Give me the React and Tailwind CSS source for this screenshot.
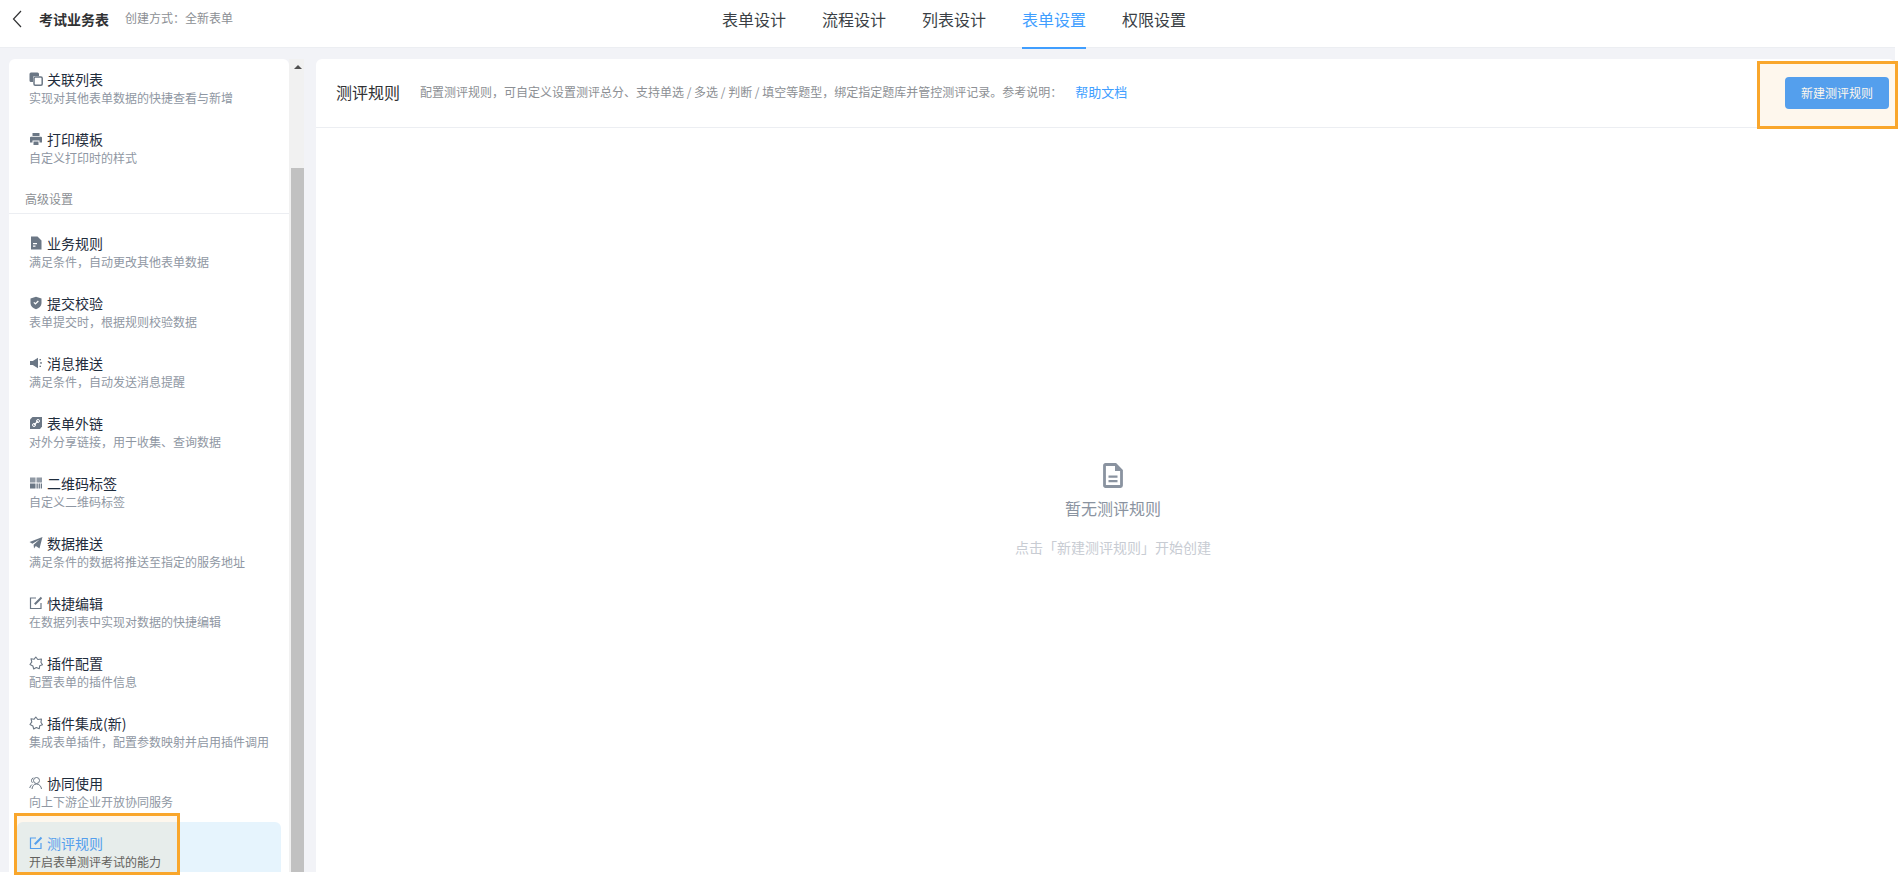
import React from 'react';

const font = { fontFamily: '"Noto Sans CJK SC", "Noto Sans", sans-serif' };

// sidebar icons, drawn on a 14x14 box
const icons = {
  link: (
    <g>
      <path d="M.5 2A1.500 1.500 0 0 1 2 .5h6.500A1.500 1.500 0 0 1 10 2v2H5.500A1.500 1.500 0 0 0 4 5.500V10H2A1.500 1.500 0 0 1 .5 8.500z" fill="currentColor" />
      <rect x="5" y="5" width="8.200" height="8.200" rx="1.200" fill="none" stroke="currentColor" strokeWidth="1.500" />
    </g>
  ),
  print: (
    <path d="M3.500 1h7v3h-7zM1 5.500A1 1 0 0 1 2 4.800h10a1 1 0 0 1 1 .7V10.500h-2.500V8.500h-7v2H1zM4.500 9.500h5V13h-5z" fill="currentColor" />
  ),
  doc: (
    <path d="M2 .5h6.500L12.500 4.500V13.500H2zM4 7v1.300h4V7zM4 9.500v1.200h2.500V9.500z" fill="currentColor" fillRule="evenodd" />
  ),
  shield: (
    <path d="M7 .800l5.500 1.700v4.800c0 3-2.400 5-5.500 6-3.100-1-5.500-3-5.500-6V2.500zM4.400 6.800l2 2 3.400-3.400-.9-.8-2.500 2.500-1.100-1.100z" fill="currentColor" fillRule="evenodd" />
  ),
  sound: (
    <g fill="currentColor">
      <path d="M1 5h2.800L9 1.800v10.400L3.800 9H1z" />
      <rect x="10.500" y="3" width="1.500" height="1.300" />
      <rect x="11" y="6.300" width="2" height="1.300" />
      <rect x="10.500" y="9.700" width="1.500" height="1.300" />
    </g>
  ),
  chain: (
    <g>
      <path d="M3.500 1H13v9.500L11 13H1V3.500z" fill="currentColor" />
      <path d="M5 9l4-4" stroke="#fff" strokeWidth="1.100" />
      <circle cx="5" cy="9" r="1.500" fill="none" stroke="#fff" strokeWidth="1" />
      <circle cx="9" cy="5" r="1.500" fill="none" stroke="#fff" strokeWidth="1" />
    </g>
  ),
  qr: (
    <g fill="currentColor">
      <rect x="1" y="1.500" width="5.500" height="5" opacity=".75" />
      <rect x="7.500" y="1.500" width="5.500" height="5" opacity=".75" />
      <rect x="1" y="7.500" width="5.500" height="5" />
      <path d="M7.500 7.500h1.300v5H7.500zM9.600 7.500h1.300v5H9.600zM11.700 7.500H13v5h-1.300z" />
    </g>
  ),
  plane: (
    <path d="M13.500 1L10.500 12.500 6.800 10 5 12.500 4.600 8.800 10.500 3.500 3.400 7.800.5 6z" fill="currentColor" />
  ),
  edit: (
    <g fill="none" stroke="currentColor">
      <path d="M12 7v5.500H1.500V2H7" strokeWidth="1.200" />
      <path d="M5.800 8.200L12.500 1.500" strokeWidth="2" />
    </g>
  ),
  plugin: (
    <path d="M6.800 1l2 2.500 3.700-.5-.6 3.300 1.600 2.400-2.800 1-.4 3.100-3-1.300-2.600 1.500-.8-3L1 8.500l1.800-2.600L2 2.800l3 .5z" fill="none" stroke="currentColor" strokeWidth="1.100" strokeLinejoin="round" />
  ),
  users: (
    <g fill="none" stroke="currentColor" strokeWidth="1">
      <circle cx="7.500" cy="4.500" r="3" />
      <path d="M3 13c.3-3 2-5 4.500-5s4.700 2 5 5" />
      <path d="M4.300 1.800A3 3 0 0 0 2.500 4.500c0 1 .4 1.800 1 2.300M3 8.500c-1 .8-2 2-2.300 3.500" />
    </g>
  ),
};

const Icon = ({ name }) => (
  <svg viewBox="0 0 14 14" className="w-[14px] h-[14px] shrink-0">
    {icons[name]}
  </svg>
);

const topItems = [
  { icon: 'link', title: '关联列表', desc: '实现对其他表单数据的快捷查看与新增' },
  { icon: 'print', title: '打印模板', desc: '自定义打印时的样式' },
];

const advancedItems = [
  { icon: 'doc', title: '业务规则', desc: '满足条件\uFF0C自动更改其他表单数据' },
  { icon: 'shield', title: '提交校验', desc: '表单提交时\uFF0C根据规则校验数据' },
  { icon: 'sound', title: '消息推送', desc: '满足条件\uFF0C自动发送消息提醒' },
  { icon: 'chain', title: '表单外链', desc: '对外分享链接\uFF0C用于收集、查询数据' },
  { icon: 'qr', title: '二维码标签', desc: '自定义二维码标签' },
  { icon: 'plane', title: '数据推送', desc: '满足条件的数据将推送至指定的服务地址' },
  { icon: 'edit', title: '快捷编辑', desc: '在数据列表中实现对数据的快捷编辑' },
  { icon: 'plugin', title: '插件配置', desc: '配置表单的插件信息' },
  { icon: 'plugin', title: '插件集成(新)', desc: '集成表单插件\uFF0C配置参数映射并启用插件调用' },
  { icon: 'users', title: '协同使用', desc: '向上下游企业开放协同服务' },
  { icon: 'edit', title: '测评规则', desc: '开启表单测评考试的能力', active: true },
];

const tabs = ['表单设计', '流程设计', '列表设计', '表单设置', '权限设置'];

const createdBy = '创建方式\uFF1A全新表单';
const ruleHint = '配置测评规则\uFF0C可自定义设置测评总分、支持单选 / 多选 / 判断 / 填空等题型\uFF0C绑定指定题库并管控测评记录。参考说明\uFF1A';

const SideItem = ({ item }) => (
  <div className={`mx-2 h-[60px] shrink-0 pt-[11px] pl-3 rounded-t-md ${item.active ? 'bg-[#e6f4fd]' : ''}`}>
    <div className={`flex items-center gap-1 h-5 text-sm leading-5 ${item.active ? 'text-[#459fff]' : 'text-[#1f2d3d]'}`}>
      <span className={item.active ? 'text-[#459fff]' : 'text-[#6b7785]'}>
        <Icon name={item.icon} />
      </span>
      <span>{item.title}</span>
    </div>
    <div className={`mt-px text-xs leading-4 whitespace-nowrap ${item.active ? 'text-[#555b63]' : 'text-[#8f97a3]'}`}>
      {item.desc}
    </div>
  </div>
);

export default function App() {
  return (
    <div className="relative h-[875px] w-full overflow-hidden bg-white" style={font}>
      <div className="w-[1895px] h-[872px] flex flex-col bg-[#f2f3f7]">
        {/* Top bar */}
        <header className="h-12 shrink-0 flex bg-white border-b border-[#eceef2]">
          <div className="w-[722px] shrink-0 flex items-start pt-[10px] pl-3">
            <svg viewBox="0 0 10 18" className="w-[10px] h-[18px] text-[#303133]">
              <path d="M9 1L1.500 9 9 17" fill="none" stroke="currentColor" strokeWidth="1.200" />
            </svg>
            <span className="ml-[17px] text-sm leading-[18px] font-bold text-[#303133]">考试业务表</span>
            <span className="ml-4 text-xs leading-[16px] text-[#8c8f94]">{createdBy}</span>
          </div>
          <nav className="flex gap-9">
            {tabs.map((tab) => (
              <div
                key={tab}
                className={`h-[49px] pt-[9px] text-base leading-5 ${tab === '表单设置' ? 'text-[#409eff] border-b-2 border-[#409eff]' : 'text-[#3a3f45]'}`}
              >
                {tab}
              </div>
            ))}
          </nav>
        </header>

        <div className="flex-1 min-h-0 flex pt-[11px] pl-[9px]">
          {/* Sidebar */}
          <aside className="w-[280px] shrink-0 bg-white rounded-t-md overflow-hidden flex flex-col">
            <div className="-mt-px">
              {topItems.map((item) => (
                <SideItem key={item.title} item={item} />
              ))}
            </div>
            <div className="shrink-0 h-9 pt-3 pl-4 text-xs leading-[18px] text-[#8c8f94] border-b border-[#eceef2]">
              高级设置
            </div>
            <div className="mt-2">
              {advancedItems.map((item) => (
                <SideItem key={item.title} item={item} />
              ))}
            </div>
          </aside>

          {/* Scrollbar */}
          <div className="w-[15px] shrink-0 bg-[#f1f1f1] flex flex-col pl-[2px]">
            <div className="h-[109px] flex justify-center pt-[6px]">
              <div className="w-0 h-0 border-x-[4px] border-x-transparent border-b-[4px] border-b-[#505050]" />
            </div>
            <div className="flex-1 bg-[#c1c1c1]" />
          </div>

          {/* Main panel */}
          <main className="ml-3 flex-1 min-w-0 bg-white rounded-t-md flex flex-col">
            <div className="h-[69px] shrink-0 flex items-center pl-5 pr-[6px] border-b border-[#eceef2]">
              <span className="mb-[2px] text-base text-[#303133]">测评规则</span>
              <span className="mb-[2px] ml-5 text-xs text-[#8c8f94] whitespace-nowrap">{ruleHint}</span>
              <a className="mb-[2px] ml-[13px] text-[13px] text-[#409eff]">帮助文档</a>
              <button className="ml-auto w-[104px] h-8 rounded-sm bg-[#459fff] text-xs text-white">新建测评规则</button>
            </div>
            <div className="flex-1 flex flex-col items-center pl-[15px] pt-[335px]">
              <svg viewBox="0 0 20 25" className="w-5 h-[25px] text-[#8a93a0]">
                <path d="M2.500 1.500h10L18.500 7.500v15a1 1 0 0 1-1 1h-15a1 1 0 0 1-1-1V2.500a1 1 0 0 1 1-1z" fill="none" stroke="currentColor" strokeWidth="2.800" />
                <path d="M12 1.500V8h6.500z" fill="currentColor" />
                <path d="M5.500 12.500h9v2.200h-9zM5.500 17h9v2.200h-9z" fill="currentColor" />
              </svg>
              <div className="mt-2 text-base leading-6 text-[#8a93a0]">暂无测评规则</div>
              <div className="mt-[17px] text-sm leading-5 text-[#c8ccd3]">点击「新建测评规则」开始创建</div>
            </div>
          </main>
        </div>
      </div>

      {/* Orange annotation boxes */}
      <div className="absolute left-[1757px] top-[61px] w-[141px] h-[68px] border-[3px] border-[#f9a62b] bg-[#f9a62b]/[0.085]" />
      <div className="absolute left-[14px] top-[813px] w-[166px] h-[62px] border-[3px] border-[#f9a62b] bg-[#f9a62b]/[0.085]" />
    </div>
  );
}
